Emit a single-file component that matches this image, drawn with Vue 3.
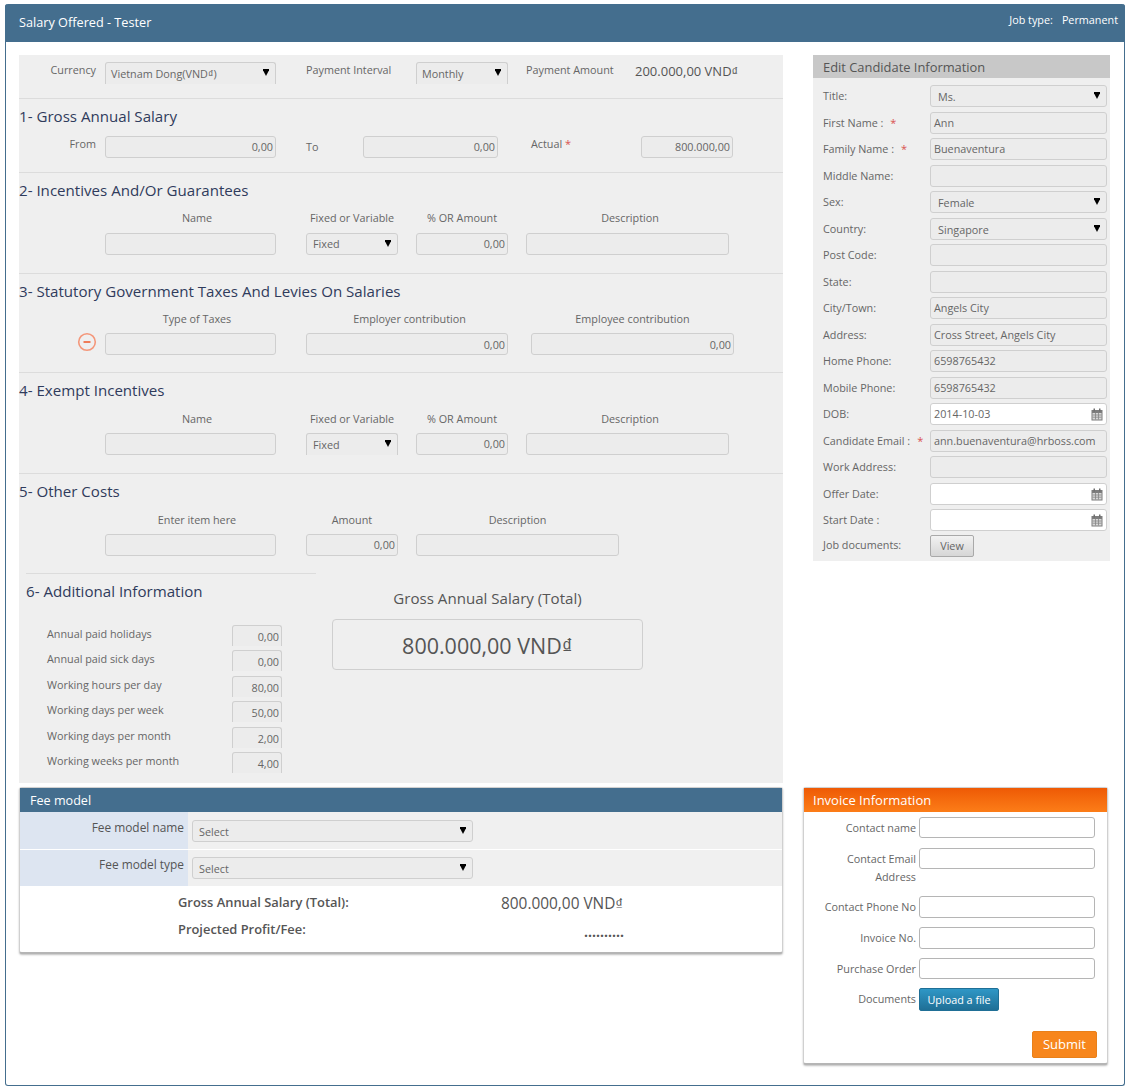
<script setup>
const additional = [
  ['Annual paid holidays', '0,00'],
  ['Annual paid sick days', '0,00'],
  ['Working hours per day', '80,00'],
  ['Working days per week', '50,00'],
  ['Working days per month', '2,00'],
  ['Working weeks per month', '4,00']
]
const candidate = [
  { label: 'Title:', type: 'select', value: 'Ms.' },
  { label: 'First Name :', req: true, value: 'Ann' },
  { label: 'Family Name :', req: true, value: 'Buenaventura' },
  { label: 'Middle Name:', value: '' },
  { label: 'Sex:', type: 'select', value: 'Female' },
  { label: 'Country:', type: 'select', value: 'Singapore' },
  { label: 'Post Code:', value: '' },
  { label: 'State:', value: '' },
  { label: 'City/Town:', value: 'Angels City' },
  { label: 'Address:', value: 'Cross Street, Angels City' },
  { label: 'Home Phone:', value: '6598765432' },
  { label: 'Mobile Phone:', value: '6598765432' },
  { label: 'DOB:', type: 'date', value: '2014-10-03' },
  { label: 'Candidate Email :', req: true, value: 'ann.buenaventura@hrboss.com' },
  { label: 'Work Address:', value: '' },
  { label: 'Offer Date:', type: 'date', value: '' },
  { label: 'Start Date :', type: 'date', value: '' }
]
const invoice = [
  { label: 'Contact name', cls: 'r1' },
  { label: 'Contact Email Address', cls: 'r2' },
  { label: 'Contact Phone No', cls: 'r3' },
  { label: 'Invoice No.', cls: 'r3' },
  { label: 'Purchase Order', cls: 'r4' }
]
const incentiveLabels = ['Name', 'Fixed or Variable', '% OR Amount', 'Description']
</script>

<template>
  <div class="page">
    <header class="top">
      <span class="top-title">Salary Offered - Tester</span>
      <span class="top-job">Job type:<b>Permanent</b></span>
    </header>
    <div class="main">
      <div class="upper">
        <section class="form">
          <div class="sec sec0">
            <span class="lab right w77">Currency</span>
            <div class="fld sel cut w171 ml9">Vietnam Dong(VND<span class="dong">₫</span>)<svg class="arr" viewBox="0 0 6 7"><path d="M0 0h6v1.2L3 7 0 1.2z" /></svg></div>
            <span class="lab pi">Payment Interval</span>
            <div class="fld sel cut w92">Monthly<svg class="arr" viewBox="0 0 6 7"><path d="M0 0h6v1.2L3 7 0 1.2z" /></svg></div>
            <span class="lab pa">Payment Amount</span>
            <span class="amount">200.000,00 VND<span class="dong">₫</span></span>
          </div>

          <div class="sec sec1">
            <h3>1- Gross Annual Salary</h3>
            <div class="row1">
              <span class="lab right w77">From</span>
              <div class="fld num w171 ml9">0,00</div>
              <span class="lab to">To</span>
              <div class="fld num w135">0,00</div>
              <span class="lab actual">Actual <i>*</i></span>
              <div class="fld num w92">800.000,00</div>
            </div>
          </div>

          <div class="sec sec2">
            <h3>2- Incentives And/Or Guarantees</h3>
            <div class="heads g2">
              <span v-for="l in incentiveLabels" :key="l">{{ l }}</span>
            </div>
            <div class="inputs g2">
              <div class="fld"></div>
              <div class="fld sel sm">Fixed<svg class="arr" viewBox="0 0 6 7"><path d="M0 0h6v1.2L3 7 0 1.2z" /></svg></div>
              <div class="fld num">0,00</div>
              <div class="fld"></div>
            </div>
          </div>

          <div class="sec sec3">
            <h3>3- Statutory Government Taxes And Levies On Salaries</h3>
            <div class="heads g3">
              <span>Type of Taxes</span><span>Employer contribution</span><span>Employee contribution</span>
            </div>
            <div class="inputs g3">
              <div class="fld">
                <svg class="minus" viewBox="0 0 20 20"><circle cx="10" cy="10" r="8.3" /><path class="bar" d="M6.5 10h7" /></svg>
              </div>
              <div class="fld num">0,00</div>
              <div class="fld num">0,00</div>
            </div>
          </div>

          <div class="sec sec4">
            <h3>4- Exempt Incentives</h3>
            <div class="heads g2">
              <span v-for="l in incentiveLabels" :key="l">{{ l }}</span>
            </div>
            <div class="inputs g2">
              <div class="fld"></div>
              <div class="fld sel sm cut">Fixed<svg class="arr" viewBox="0 0 6 7"><path d="M0 0h6v1.2L3 7 0 1.2z" /></svg></div>
              <div class="fld num">0,00</div>
              <div class="fld"></div>
            </div>
          </div>

          <div class="sec5">
            <h3>5- Other Costs</h3>
            <div class="heads g5">
              <span>Enter item here</span><span>Amount</span><span>Description</span>
            </div>
            <div class="inputs g5">
              <div class="fld"></div>
              <div class="fld num">0,00</div>
              <div class="fld"></div>
            </div>
          </div>

          <div class="bottom">
            <div class="addl">
              <h3>6- Additional Information</h3>
              <div class="addl-rows">
                <div v-for="a in additional" :key="a[0]" class="addl-row">
                  <span>{{ a[0] }}</span>
                  <div class="fld num cut small">{{ a[1] }}</div>
                </div>
              </div>
            </div>
            <div class="total">
              <div class="total-title">Gross Annual Salary (Total)</div>
              <div class="total-box">800.000,00 VND<span class="dong">₫</span></div>
            </div>
          </div>
        </section>

        <aside class="cand">
          <div class="cand-head">Edit Candidate Information</div>
          <div class="cand-rows">
            <div v-for="c in candidate" :key="c.label" class="cand-row">
              <span class="cand-lab">{{ c.label }}<i v-if="c.req">*</i></span>
              <div class="fld cf" :class="{ sel: c.type === 'select', date: c.type === 'date' }">
                {{ c.value }}
                <svg v-if="c.type === 'select'" class="arr" viewBox="0 0 6 7"><path d="M0 0h6v1.2L3 7 0 1.2z" /></svg>
                <svg v-if="c.type === 'date'" class="cal" viewBox="0 0 12 13">
                  <rect x="0.5" y="2" width="11" height="10.5" fill="#7d7d7d" />
                  <rect x="2.5" y="0.5" width="1.5" height="3" fill="#6f6f6f" />
                  <rect x="8" y="0.5" width="1.5" height="3" fill="#6f6f6f" />
                  <path d="M1.5 5h9v6.5h-9z" fill="#d8d8d8" />
                  <path d="M1.5 7h9M1.5 9.2h9M4.5 5v6.5M7.5 5v6.5" stroke="#858585" stroke-width=".8" />
                </svg>
              </div>
            </div>
            <div class="cand-row last">
              <span class="cand-lab">Job documents:</span>
              <button class="view" type="button">View</button>
            </div>
          </div>
        </aside>
      </div>

      <div class="lower">
        <section class="fee">
          <div class="fee-head">Fee model</div>
          <div class="fee-row first">
            <div class="fee-lab">Fee model name</div>
            <div class="fee-cell"><div class="fld sel fs">Select<svg class="arr" viewBox="0 0 6 7"><path d="M0 0h6v1.2L3 7 0 1.2z" /></svg></div></div>
          </div>
          <div class="fee-row second">
            <div class="fee-lab">Fee model type</div>
            <div class="fee-cell"><div class="fld sel fs">Select<svg class="arr" viewBox="0 0 6 7"><path d="M0 0h6v1.2L3 7 0 1.2z" /></svg></div></div>
          </div>
          <div class="fee-sum">
            <div class="sum-row"><b>Gross Annual Salary (Total):</b><span>800.000,00 VND<span class="dong">₫</span></span></div>
            <div class="sum-row p"><b>Projected Profit/Fee:</b><span class="dots">..........</span></div>
          </div>
        </section>

        <section class="inv">
          <div class="inv-head">Invoice Information</div>
          <div class="inv-body">
            <div v-for="r in invoice" :key="r.label" class="inv-row" :class="r.cls">
              <span class="inv-lab">{{ r.label }}</span>
              <div class="fld white"></div>
            </div>
            <div class="inv-row docs">
              <span class="inv-lab">Documents</span>
              <button class="upload" type="button">Upload a file</button>
            </div>
            <div class="inv-foot"><button class="submit" type="button">Submit</button></div>
          </div>
        </section>
      </div>
    </div>
  </div>
</template>

<style>
html, body { margin: 0; background: #fff; }
</style>

<style scoped>
.page {
  box-sizing: border-box;
  width: 1120px;
  height: 1082px;
  margin: 4px 0 0 5px;
  border: 1px solid #446e8e;
  border-top: 0;
  border-radius: 3px;
  font-family: "Open Sans", "Noto Sans", sans-serif;
  font-size: 10.8px;
  color: #666;
  background: #fff;
}
.top {
  height: 38px;
  margin: 0 -1px;
  background: #446e8e;
  border-radius: 3px 3px 0 0;
  color: #fff;
  display: flex;
  justify-content: space-between;
  padding: 0 7px 0 14px;
}
.top-title { font-size: 12.7px; line-height: 36px; }
.top-job { font-size: 10.8px; line-height: 32px; }
.top-job b { font-weight: 400; margin-left: 9px; }
.main { padding: 13px 14px 0 13px; }
.upper { display: flex; align-items: flex-start; }
.lower { display: flex; align-items: flex-start; margin-top: 4px; }

.form { width: 764px; height: 728px; background: #efefef; flex: none; }
h3 { margin: 0; font-size: 15.1px; font-weight: 400; color: #2f3b5c; line-height: 20px; }

.sec { border-bottom: 1px solid #dcdcdc; box-sizing: border-box; }
.sec0 { height: 44px; display: flex; padding-top: 7px; box-sizing: border-box; }
.sec1 { height: 74px; padding-top: 7px; }
.sec2 { height: 101px; padding-top: 7px; }
.sec3 { height: 99px; padding-top: 7px; }
.sec4 { height: 101px; padding-top: 7px; }
.sec5 { height: 99px; padding-top: 7px; box-sizing: border-box; }
.sec2 .heads, .sec3 .heads { margin-top: 10px; }
.sec2 .inputs { margin-top: 7px; }
.sec4 .heads, .sec5 .heads { margin-top: 11px; }

.lab { line-height: 16px; white-space: nowrap; }
.right { text-align: right; }
.w77 { width: 77px; flex: none; }
.w171 { width: 171px; }
.w135 { width: 135px; }
.w92 { width: 92px; }
.ml9 { margin-left: 9px; }
.pi { margin-left: 30px; width: 110px; flex: none; }
.pa { margin-left: 18px; width: 109px; flex: none; }
.amount { font-size: 13px; line-height: 18px; color: #555; white-space: nowrap; }
.dong { font-family: "Liberation Sans", sans-serif; }

.fld {
  box-sizing: border-box;
  flex: none;
  height: 22px;
  border: 1px solid #cfcfcf;
  border-radius: 3px;
  background: #ececec;
  line-height: 20px;
  padding: 0 2px;
  color: #666;
  position: relative;
  white-space: nowrap;
}
.num { text-align: right; }
.sel { padding-left: 5px; line-height: 22px; }
.cut { border-bottom: 0; border-radius: 3px 3px 0 0; }
.sm { padding-left: 6px; line-height: 20px; }
.sm.cut { line-height: 22px; }
.sec3 .num { line-height: 21px; }
.arr { position: absolute; right: 6px; top: 6px; width: 6px; height: 7px; fill: #000; }

.row1 { display: flex; margin-top: 10px; }
.to { margin: 3px 0 0 30px; width: 57px; flex: none; }
.actual { margin-left: 33px; width: 110px; flex: none; }
.actual i, .cand-lab i { color: #d9534f; font-style: normal; font-size: 11px; }

.heads { display: grid; margin-top: 10px; text-align: center; line-height: 16px; }
.inputs { display: grid; margin-top: 6px; }
.inputs .fld { width: 100%; }
.g2 { margin-left: 86px; grid-template-columns: 201px 110px 110px 203px; }
.g2 > .fld:nth-child(1) { width: 171px; }
.g2 > .fld:nth-child(2), .g2 > .fld:nth-child(3) { width: 92px; }
.g2 span:nth-child(1) { width: 184px; }
.g2 span:nth-child(2), .g2 span:nth-child(3) { width: 92px; }
.g2 span:nth-child(4) { width: 208px; }
.g3 { margin-left: 86px; grid-template-columns: 201px 225px 203px; }
.g3 > .fld:nth-child(1) { width: 171px; }
.g3 > .fld:nth-child(2) { width: 202px; }
.g3 span:nth-child(1) { width: 184px; }
.g3 span:nth-child(2) { width: 207px; }
.g3 span:nth-child(3) { width: 203px; }
.g5 { margin-left: 86px; grid-template-columns: 201px 110px 203px; }
.g5 > .fld:nth-child(1) { width: 171px; }
.g5 > .fld:nth-child(2) { width: 92px; }
.g5 span:nth-child(1) { width: 184px; }
.g5 span:nth-child(2) { width: 92px; }
.g5 span:nth-child(3) { width: 203px; }

.minus {
  position: absolute;
  left: -29px;
  top: -2px;
  width: 20px;
  height: 20px;
  fill: none;
  stroke: #f4977a;
  stroke-width: 1.6;
}
.minus .bar { stroke: #ef7c58; stroke-width: 2; }

.bottom { display: flex; padding-left: 7px; }
.addl { width: 290px; flex: none; border-top: 1px solid #dcdcdc; padding-top: 7px; box-sizing: border-box; height: 210px; }
.addl-rows { margin-top: 23.75px; padding: 0 34px 0 21px; }
.addl-row { display: flex; justify-content: space-between; height: 25.5px; }
.addl-row span { line-height: 18px; }
.small { width: 50px; height: 21px; padding-top: 1px; }
.total { margin-left: 16px; width: 311px; padding-top: 15px; text-align: center; }
.total-title { font-size: 15.1px; line-height: 20px; color: #555; }
.total-box {
  box-sizing: border-box;
  height: 51px;
  margin-top: 11px;
  border: 1px solid #cfcfcf;
  border-radius: 4px;
  background: #efefef;
  font-size: 21.5px;
  line-height: 52px;
  color: #555;
}

.cand { width: 297px; margin-left: 30px; background: #efefef; flex: none; height: 506px; }
.cand-head { height: 23px; background: #c8c8c8; padding-left: 10px; font-size: 12.9px; line-height: 25px; color: #555; }
.cand-rows { padding: 7px 3px 0 10px; }
.cand-row { display: flex; height: 26.5px; }
.cand-lab { width: 107px; flex: none; line-height: 22px; white-space: nowrap; }
.cand-lab i { margin-left: 7px; }
.cf { width: 177px; padding-left: 3px; line-height: 20px; }
.cf.sel { padding-left: 7px; line-height: 22px; }
.date { background: #fff; }
.cal { position: absolute; right: 3px; top: 4px; width: 12px; height: 13px; }
.last { height: 24px; margin-top: -1px; }
.last .cand-lab { line-height: 20px; }
.view {
  box-sizing: border-box;
  width: 44px;
  height: 22px;
  border: 1px solid #a9a9a9;
  border-radius: 2px;
  background: linear-gradient(#f2f2f2, #d6d6d6);
  font: 10.8px "Open Sans", sans-serif;
  color: #666;
  padding: 0;
}

.fee {
  box-sizing: border-box;
  width: 764px;
  height: 167px;
  flex: none;
  border: 1px solid #d0d0d0;
  border-bottom: 2px solid #b5b5b5;
  border-radius: 3px;
  background: #fff;
  box-shadow: 0 1px 2px rgba(0, 0, 0, .25);
}
.fee-head { height: 24px; background: #446e8e; color: #fff; font-size: 12.6px; line-height: 25px; padding-left: 10px; }
.fee-row { display: flex; height: 38px; border-bottom: 1px solid #fff; box-sizing: border-box; }
.second { height: 36px; border-bottom: 0; }
.fee-lab { width: 168px; flex: none; box-sizing: border-box; background: #dde5f1; text-align: right; padding: 6px 4px 0 0; line-height: 16px; color: #555; font-size: 11.9px; }
.fee-cell { flex: 1; background: #f0f0f0; padding: 7px 0 0 4px; }
.first .fee-lab { padding-top: 7px; }
.first .fee-cell { padding-top: 8px; }
.fs { width: 281px; padding-left: 6px; }
.fee-sum { padding: 7px 0 0 158px; }
.sum-row { display: flex; height: 27px; line-height: 18px; font-size: 12.9px; color: #555; }
.sum-row b { width: 323px; flex: none; font-weight: 600; }
.sum-row > span { width: 123px; font-size: 15.4px; line-height: 22px; white-space: nowrap; }
.dots { text-align: right; font-weight: 700; line-height: 23px !important; color: #555; font-size: 14px !important; }

.inv {
  box-sizing: border-box;
  width: 305px;
  height: 278px;
  margin-left: 20px;
  flex: none;
  border: 1px solid #d0d0d0;
  border-bottom: 2px solid #b5b5b5;
  border-radius: 3px;
  background: #fff;
  box-shadow: 0 1px 2px rgba(0, 0, 0, .25);
}
.inv-head { height: 24px; background: linear-gradient(#ee5a05, #fc7d18); color: #fff; font-size: 13px; line-height: 25px; padding-left: 9px; }
.inv-body { padding: 5px 0 0 0; }
.inv-row { display: flex; }
.r1 { height: 31px; }
.r2 { height: 48px; }
.r3 { height: 31px; }
.r4 { height: 30px; }
.inv-lab { width: 112px; flex: none; text-align: right; line-height: 18px; padding-top: 2px; }
.inv-row .fld { width: 176px; margin-left: 3px; height: 21px; }
.inv-row.r3 .fld { height: 22px; }
.white { background: #fff; border-color: #b5b5b5; }
.docs { height: 43px; }
.upload {
  box-sizing: border-box;
  width: 80px;
  height: 23px;
  margin-left: 3px;
  border: 1px solid #1f6f96;
  border-radius: 2px;
  background: linear-gradient(#2f97c6, #1f6f96);
  color: #fff;
  font: 10.8px "Open Sans", sans-serif;
  padding: 0;
}
.inv-foot { display: flex; justify-content: flex-end; padding-right: 10px; }
.submit {
  box-sizing: border-box;
  width: 65px;
  height: 27px;
  border: 1px solid #e8801a;
  border-radius: 2px;
  background: #f7861c;
  color: #fff;
  font: 13px "Open Sans", sans-serif;
  padding: 0 0 2px;
}
</style>
